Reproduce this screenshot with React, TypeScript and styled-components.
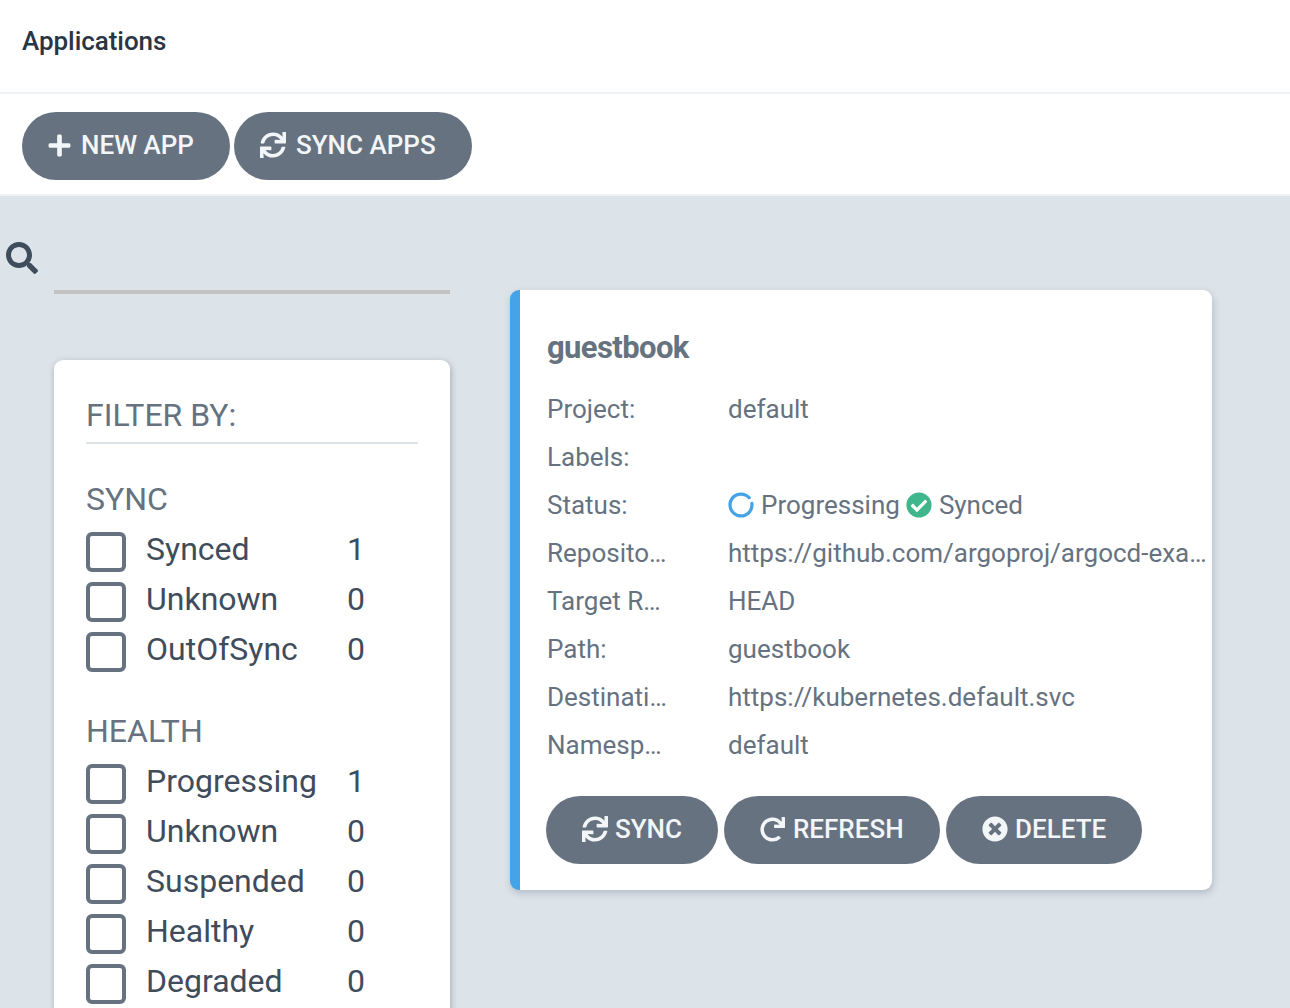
import React from 'react';
import styled, { createGlobalStyle } from 'styled-components';
import { FaPlus, FaSync, FaRedo, FaTimesCircle, FaCheckCircle, FaSearch, FaCircleNotch } from 'react-icons/fa';

const Global = createGlobalStyle`
  html, body { margin: 0; padding: 0; height: 1008px; overflow: hidden; background: #fff; }
  body { font-family: Roboto, "Liberation Sans", sans-serif; }
  #root { height: 1008px; overflow: hidden; }
`;
const Page = styled.div`display: flex; flex-direction: column; height: 1008px; overflow: hidden;`;
const Header = styled.header`
  height: 92px; border-bottom: 2px solid #eff2f5; flex: none;
  display: flex; align-items: center; padding-left: 22px;
`;
const Title = styled.h1`margin: -10px 0 0; font-size: 26px; font-weight: 500; color: #2b3443; line-height: 30px; letter-spacing: -0.05px;`;
const Toolbar = styled.div`
  height: 96px; padding: 4px 22px 0; border-bottom: 2px solid #eff2f5; display: flex; align-items: center;
  gap: 4px; flex: none;
`;
const Pill = styled.button<{ $w: number; $pad: number; $gap: number }>`
  width: ${p => p.$w}px; height: 68px; border: 0; border-radius: 34px; background: #66727f; color: #f3f6f8;
  font-family: inherit; font-size: 26px; font-weight: 500; display: flex; align-items: center;
  padding: 0 0 2px ${p => p.$pad}px; gap: ${p => p.$gap}px; flex: none; white-space: nowrap;
  svg { flex: none; }
`;
const Body = styled.main`
  flex: 1; min-height: 0; background: #dce3e9; display: flex; align-items: flex-start; overflow: hidden;
`;
const Side = styled.aside`width: 450px; flex: none; padding-top: 46px; box-sizing: border-box;`;
const SearchRow = styled.div`display: flex; align-items: flex-start; padding-left: 6px; gap: 16px; height: 52px; color: #3f4c5b;`;
const SearchField = styled.div`flex: 1; height: 48px; border-bottom: 4px solid #c2c2c2;`;
const SearchGlyph = styled.div`height: 32px; line-height: 0;`;
const Panel = styled.section`
  margin: 66px 0 0 54px; background: #fff; border-radius: 9px; padding: 32px 32px 40px;
  box-shadow: 1px 2px 6px rgba(70, 85, 105, 0.4); height: 700px; box-sizing: border-box;
`;
const PanelTitle = styled.h2`
  margin: 0; font-size: 32px; font-weight: 400; color: #66727f; line-height: 46px; height: 52px; border-bottom: 2px solid #dce3e9;
  box-sizing: border-box;
`;
const Group = styled.div<{ $top: number }>`margin-top: ${p => p.$top}px;`;
const GroupTitle = styled.h3`margin: 0 0 5px; font-size: 32px; font-weight: 400; color: #66727f; line-height: 38px; height: 40px;`;
const Row = styled.label`display: flex; align-items: center; height: 50px; color: #3f4c5b; font-size: 32px;`;
const Box = styled.span`width: 40px; height: 40px; box-sizing: border-box; border: 4px solid #66727f; border-radius: 6px; flex: none; margin-top: 3px;`;
const RowLabel = styled.span`margin-left: 20px; width: 201px; white-space: nowrap; margin-top: -2px;`;
const RowCount = styled.span`margin-top: -2px;`;
const CardArea = styled.div`margin: 94px 0 0 60px;`;
const Card = styled.article`
  width: 702px; height: 600px; box-sizing: border-box; background: #fff; border-left: 10px solid #45a3e8; border-radius: 9px;
  padding: 36px 0 0 27px; box-shadow: 1px 3px 7px rgba(70, 85, 105, 0.28);
`;
const CardTitle = styled.h2`margin: 0 0 16px; font-size: 31px; font-weight: 700; color: #66727f; line-height: 44px; letter-spacing: -0.6px;`;
const InfoRow = styled.div`display: flex; align-items: center; box-sizing: border-box; height: 48px; padding-bottom: 2px; font-size: 26px; color: #66727f; white-space: nowrap;`;
const InfoKey = styled.span`width: 181px; flex: none;`;
const InfoValue = styled.span`display: flex; align-items: center; gap: 6px;`;
const Status = styled.span`display: inline-flex; align-items: center; gap: 7px;`;
const Spinner = styled(FaCircleNotch)`transform: rotate(65deg);`;
const CardActions = styled.div`display: flex; gap: 6px; margin: 26px 0 0 -1px;`;

const sync = ['Synced:1', 'Unknown:0', 'OutOfSync:0'];
const health = ['Progressing:1', 'Unknown:0', 'Suspended:0', 'Healthy:0', 'Degraded:0'];
const info: [string, string][] = [
  ['Project:', 'default'],
  ['Labels:', ''],
  ['Status:', ''],
  ['Reposito…', 'https://github.com/argoproj/argocd-exa…'],
  ['Target R…', 'HEAD'],
  ['Path:', 'guestbook'],
  ['Destinati…', 'https://kubernetes.default.svc'],
  ['Namesp…', 'default'],
];

const Filter = ({ items }: { items: string[] }) => (
  <>
    {items.map(i => {
      const [l, c] = i.split(':');
      return (
        <Row key={l}>
          <Box />
          <RowLabel>{l}</RowLabel>
          <RowCount>{c}</RowCount>
        </Row>
      );
    })}
  </>
);

export default function App() {
  return (
    <Page>
      <Global />
      <Header><Title>Applications</Title></Header>
      <Toolbar>
        <Pill $w={208} $pad={25} $gap={9}><FaPlus size={25} />NEW APP</Pill>
        <Pill $w={238} $pad={26} $gap={10}><FaSync size={26} />SYNC APPS</Pill>
      </Toolbar>
      <Body>
        <Side>
          <SearchRow>
            <SearchGlyph><FaSearch size={32} /></SearchGlyph>
            <SearchField />
          </SearchRow>
          <Panel>
            <PanelTitle>FILTER BY:</PanelTitle>
            <Group $top={36}>
              <GroupTitle>SYNC</GroupTitle>
              <Filter items={sync} />
            </Group>
            <Group $top={37}>
              <GroupTitle>HEALTH</GroupTitle>
              <Filter items={health} />
            </Group>
          </Panel>
        </Side>
        <CardArea>
          <Card>
            <CardTitle>guestbook</CardTitle>
            {info.map(([k, v]) => (
              <InfoRow key={k}>
                <InfoKey>{k}</InfoKey>
                {k === 'Status:' ? (
                  <InfoValue>
                    <Status><Spinner size={26} color="#45a3e8" />Progressing</Status>
                    <Status><FaCheckCircle size={26} color="#3fb68b" />Synced</Status>
                  </InfoValue>
                ) : (
                  <InfoValue>{v}</InfoValue>
                )}
              </InfoRow>
            ))}
            <CardActions>
              <Pill $w={172} $pad={36} $gap={7}><FaSync size={26} />SYNC</Pill>
              <Pill $w={216} $pad={36} $gap={8}><FaRedo size={25} />REFRESH</Pill>
              <Pill $w={196} $pad={36} $gap={7}><FaTimesCircle size={26} />DELETE</Pill>
            </CardActions>
          </Card>
        </CardArea>
      </Body>
    </Page>
  );
}
